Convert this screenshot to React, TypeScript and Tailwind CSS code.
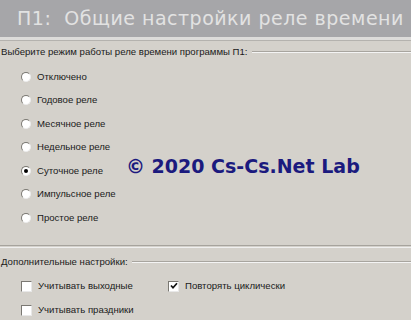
import React from 'react';

const RADIOS = [
  'Отключено',
  'Годовое реле',
  'Месячное реле',
  'Недельное реле',
  'Суточное реле',
  'Импульсное реле',
  'Простое реле',
];

const Radio: React.FC<{ checked?: boolean }> = ({ checked }) => (
  <span className="relative w-[10px] h-[10px] rounded-full bg-white border border-t-[#7a7872] border-l-[#7a7872] border-r-[#ececec] border-b-[#ececec] shrink-0 flex items-center justify-center">
    {checked && <span className="w-[4px] h-[4px] rounded-full bg-black" />}
  </span>
);

const Check: React.FC<{ checked?: boolean }> = ({ checked }) => (
  <span className="w-[11px] h-[11px] bg-white border border-t-[#7a7872] border-l-[#7a7872] border-r-[#e8e8e8] border-b-[#e8e8e8] shrink-0 flex items-center justify-center">
    {checked && (
      <svg width="8" height="8" viewBox="0 0 8 8">
        <path d="M1 3.5 L3 5.8 L7 1.2" fill="none" stroke="#111" strokeWidth="1.7" />
      </svg>
    )}
  </span>
);

const Legend: React.FC<{ text: string }> = ({ text }) => (
  <div className="flex items-center h-[22px]">
    <span className="pl-[1px] pr-[4px] text-[#1a1a1a]">{text}</span>
    <div className="flex-1 h-[2px] border-t border-t-[#a8a59f] border-b border-b-[#f4f4f4] -mt-[1px]" />
  </div>
);

export default function App() {
  return (
    <div className="relative w-[411px] h-[320px] overflow-hidden bg-[#d4d1cb] text-[9.6px] text-[#1a1a1a]" style={{ fontFamily: '"Liberation Sans", Arial, sans-serif' }}>
      <div className="h-[37px] bg-[#a6a6a9] flex items-center pl-[17px]">
        <span className="whitespace-pre text-[19px] text-[#e2e2e2] tracking-[0.5px]" style={{ fontFamily: '"DejaVu Sans", Verdana, sans-serif' }}>
          П1:  Общие настройки реле времени
        </span>
      </div>
      <div className="h-[4px] bg-[#dddcda] border-b border-b-[#b4b2ae]" />

      <div className="h-[204px]">
        <Legend text="Выберите режим работы реле времени программы П1:" />
        <div className="flex flex-col pl-[21px] mt-[2px]">
          {RADIOS.map((r, i) => (
            <div key={r} className="h-[23.5px] flex items-center gap-[6px]">
              <Radio checked={i === 4} />
              <span>{r}</span>
            </div>
          ))}
        </div>
      </div>
      <div className="h-[3px] border-t border-t-[#a6a39d] border-b border-b-[#efefef]" />

      <div className="mt-[3px]">
        <Legend text="Дополнительные настройки:" />
        <div className="grid grid-cols-[147px_1fr] pl-[21px] mt-[1px]">
          <div className="h-[24px] flex items-center gap-[6px]">
            <Check />
            <span>Учитывать выходные</span>
          </div>
          <div className="h-[24px] flex items-center gap-[6px]">
            <Check checked />
            <span>Повторять циклически</span>
          </div>
          <div className="h-[24px] flex items-center gap-[6px]">
            <Check />
            <span>Учитывать праздники</span>
          </div>
        </div>
      </div>

      <div className="absolute left-[126px] top-[152px] text-[19px] font-bold text-[#1b1a7e]" style={{ fontFamily: '"DejaVu Sans", Verdana, sans-serif' }}>
        © 2020 Cs-Cs.Net Lab
      </div>
    </div>
  );
}
